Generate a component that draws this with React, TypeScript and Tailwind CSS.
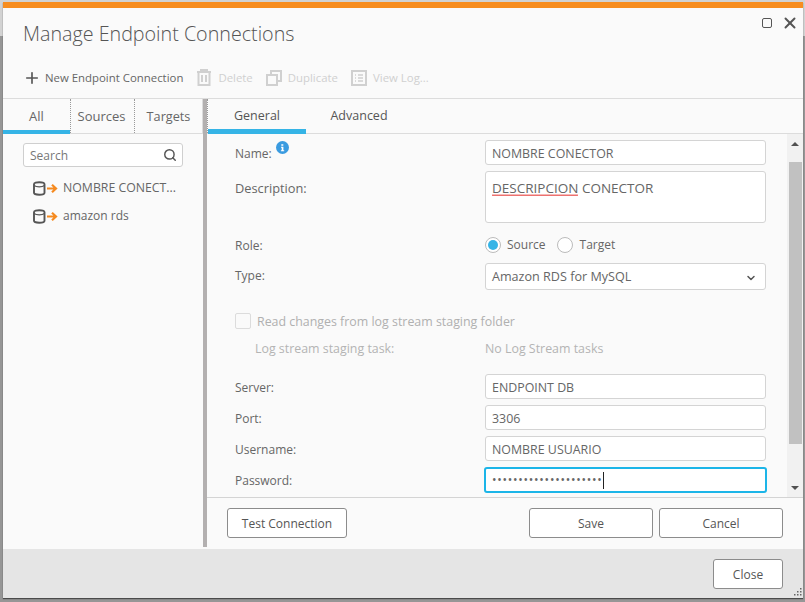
import { Plus, Search, X, ChevronDown } from "lucide-react";
import type { ReactNode } from "react";

const font = "font-['Open_Sans',sans-serif]";

const squigglePath = "M0 2" + Array.from({ length: 43 }, () => "l1-1.5 1 1.5").join("");

const TrashIcon = () => (
  <svg width="16" height="17" viewBox="0 0 16 17" fill="none" stroke="#d0d0d0" strokeWidth="2">
    <path d="M1 3h14M5 3V1h6v2M2.5 3v13h11V3M6 6v7M10 6v7" />
  </svg>
);

const CopyIcon = () => (
  <svg width="16" height="16" viewBox="0 0 16 16" fill="none" stroke="#d0d0d0" strokeWidth="2">
    <path d="M5 4V1h10v10h-3" />
    <rect x="1" y="5" width="10" height="10" />
  </svg>
);

const LogIcon = () => (
  <svg width="16" height="16" viewBox="0 0 16 16" fill="none" stroke="#d0d0d0" strokeWidth="2">
    <rect x="1" y="1" width="14" height="14" />
    <path d="M4 5h1M4 8h1M4 11h1M7 5h5M7 8h5M7 11h5" strokeWidth="1.5" />
  </svg>
);

const DbIcon = () => (
  <svg width="26" height="15" viewBox="0 0 26 15" fill="none">
    <path d="M1 3.2C1 .6 11.5 .6 11.5 3.2v8.6c0 2.6-10.5 2.6-10.5 0z" stroke="#555" strokeWidth="1.9" />
    <path d="M1 4.5c2.5 1.8 8 1.8 10.5 0" stroke="#555" strokeWidth="1.4" />
    <path d="M14 7.5h9M19 3.8l4 3.7-4 3.7" stroke="#f58a1f" strokeWidth="2.2" />
  </svg>
);

const InfoDot = () => (
  <svg className="absolute left-[41px] top-[-4px]" width="13" height="13" viewBox="0 0 13 13">
    <circle cx="6.5" cy="6.5" r="6.5" fill="#3a9be0" />
    <path d="M5.3 3.2h2v1.6h-2zM5 5.8h2.4v3.4h.8v1H4.9v-1h.8V6.8H5z" fill="#fff" />
  </svg>
);

const Tool = ({ icon, label, className }: { icon: ReactNode; label: string; className: string }) => (
  <div className={`flex items-center gap-[6px] text-[11.4px] text-[#d0d0d0] ${className}`}>
    {icon}
    <span>{label}</span>
  </div>
);

const Field = ({ value }: { value: string }) => (
  <div className="h-[25px] w-[281px] rounded-[3px] border border-[#d4d4d4] bg-white pl-[6px] text-[12.4px] leading-[25px] text-[#666]">
    {value}
  </div>
);

const Row = ({ label, children, className = "" }: { label: ReactNode; children: ReactNode; className?: string }) => (
  <div className={`flex items-center ${className}`}>
    <div className="w-[250px] pt-[2px] text-[12px] text-[#666]">{label}</div>
    {children}
  </div>
);

const Btn = ({ label, className }: { label: string; className: string }) => (
  <button className={`h-[30px] rounded-[3px] border border-[#8c8c8c] bg-white pt-[1px] text-[12px] text-[#555] ${className}`}>
    {label}
  </button>
);

export default function App() {
  return (
    <div className={`h-[602px] w-[805px] overflow-hidden bg-[linear-gradient(#d2d2d2_36px,#969696_36px)] pl-[3px] pt-[2px] ${font}`}>
      <div className="flex h-[596px] w-[800px] flex-col bg-[#fafafa] shadow-[0_1px_1px_rgba(0,0,0,0.5)]">
        <div className="h-[6px] bg-[#f78d1f]" />

        <div className="flex h-[52px] items-start justify-between pl-[20px] pr-[4px]">
          <h1 className="pt-[12px] text-[19.7px] font-light leading-[28px] text-[#555]">Manage Endpoint Connections</h1>
          <div className="flex items-center gap-[9px] pt-[6px]">
            <div className="h-[10px] w-[10px] rounded-[2px] border border-[#555]" />
            <X size={18} strokeWidth={2.6} className="text-[#555]" />
          </div>
        </div>

        <div className="flex h-[39px] items-center border-b border-[#dcdcdc] pb-[2px] pl-[22px]">
          <div className="flex items-center gap-[6px] text-[11.4px] text-[#666]">
            <Plus size={18} strokeWidth={2.2} className="-mx-[2px] text-[#555]" />
            <span>New Endpoint Connection</span>
          </div>
          <Tool icon={<TrashIcon />} label="Delete" className="ml-[13px] gap-[5px]" />
          <Tool icon={<CopyIcon />} label="Duplicate" className="ml-[13px]" />
          <Tool icon={<LogIcon />} label="View Log..." className="ml-[13px]" />
        </div>

        <div className="flex min-h-0 flex-1">
          <div className="w-[200px] shrink-0">
            <div className="flex h-[35px] border-b border-r border-[#dcdcdc] text-[13px] text-[#666]">
              <div className="-mb-px flex w-[67px] items-center justify-center border-b-[4px] border-[#35b4e6] pt-[5px]">All</div>
              <div className="flex w-[64px] items-center justify-center border-l border-dotted border-[#999] pr-[2px] pt-[1px]">Sources</div>
              <div className="flex flex-1 items-center justify-center border-l border-dotted border-[#999] pt-[1px] text-[12.7px]">Targets</div>
            </div>
            <div className="ml-[20px] mt-[9px] flex h-[24px] w-[160px] items-center justify-between rounded-[3px] border border-[#cfcfcf] bg-white pl-[6px] pr-[5px] text-[12px] text-[#777]">
              <span className="pt-[1px]">Search</span>
              <Search size={14} strokeWidth={2.5} className="text-[#555]" />
            </div>
            <div className="ml-[30px] mt-[7px] flex h-[28px] items-center gap-[4px] text-[12.3px] text-[#666]">
              <DbIcon />
              <span>NOMBRE CONECT...</span>
            </div>
            <div className="ml-[30px] flex h-[28px] items-center gap-[4px] text-[12px] text-[#666]">
              <DbIcon />
              <span>amazon rds</span>
            </div>
          </div>

          <div className="mb-[2px] w-[4px] shrink-0 bg-[#b3b0b0]" />

          <div className="flex min-w-0 flex-1 flex-col">
            <div className="flex h-[35px] shrink-0 border-b border-[#dcdcdc] text-[12.5px] text-[#555]">
              <div className="w-px border-l border-dotted border-[#999]" />
              <div className="-mb-px flex w-[98px] items-center justify-center border-b-[5px] border-[#35b4e6] pt-[4px]">General</div>
              <div className="flex w-[106px] items-center justify-center">Advanced</div>
            </div>

            <div className="flex h-[364px] shrink-0 border-b border-[#d4d4d4]">
              <div className="flex-1 overflow-hidden pl-[28px] pt-[6px]">
                <Row
                  label={
                    <span className="relative">
                      Name:
                      <InfoDot />
                    </span>
                  }
                >
                  <Field value="NOMBRE CONECTOR" />
                </Row>
                <div className="mt-[6px] flex">
                  <div className="w-[250px] pt-[8px] text-[12.8px] text-[#666]">Description:</div>
                  <div className="h-[52px] w-[281px] rounded-[3px] border border-[#d4d4d4] bg-white pl-[6px] pt-[6px] text-[13.5px] leading-[20px] text-[#666]">
                    <span className="relative">
                      DESCRIPCION
                      <svg className="absolute left-0 top-[15px]" width="86" height="3" viewBox="0 0 86 3" fill="none">
                        <path d={squigglePath} stroke="#e53935" strokeWidth="0.8" />
                      </svg>
                    </span>{" "}
                    CONECTOR
                  </div>
                </div>
                <Row label="Role:" className="mt-[13px] h-[17px]">
                  <div className="flex items-center text-[12px] text-[#666]">
                    <div className="flex h-[16px] w-[16px] items-center justify-center rounded-full border border-[#bbb] bg-white">
                      <div className="h-[10px] w-[10px] rounded-full bg-[#35b4e6]" />
                    </div>
                    <span className="ml-[6px]">Source</span>
                    <div className="ml-[11px] h-[16px] w-[16px] rounded-full border border-[#bbb] bg-white" />
                    <span className="ml-[7px]">Target</span>
                  </div>
                </Row>
                <div className="mt-[10px] flex items-center">
                  <div className="w-[250px] pb-[2px] text-[12px] text-[#666]">Type:</div>
                  <div className="flex h-[27px] w-[281px] items-center justify-between rounded-[3px] border border-[#d4d4d4] bg-white pl-[6px] pr-[8px] pt-[2px] text-[12.6px] text-[#666]">
                    <span>Amazon RDS for MySQL</span>
                    <ChevronDown size={12} strokeWidth={3} className="text-[#555]" />
                  </div>
                </div>
                <div className="mt-[23px] flex h-[16px] items-center text-[12.4px] text-[#b0b0b0]">
                  <div className="h-[16px] w-[16px] rounded-[2px] border border-[#dcdcdc] bg-[#fafafa]" />
                  <span className="ml-[6px] pt-[2px]">Read changes from log stream staging folder</span>
                </div>
                <div className="mt-[11px] flex h-[17px] items-center pt-[2px] text-[12.4px] text-[#b4b4b4]">
                  <span className="ml-[20px] w-[230px]">Log stream staging task:</span>
                  <span>No Log Stream tasks</span>
                </div>
                <Row label="Server:" className="mt-[17px]">
                  <Field value="ENDPOINT DB" />
                </Row>
                <Row label="Port:" className="mt-[6px]">
                  <Field value="3306" />
                </Row>
                <Row label="Username:" className="mt-[6px]">
                  <Field value="NOMBRE USUARIO" />
                </Row>
                <Row label="Password:" className="mt-[6px]">
                  <div className="-ml-px flex h-[26px] w-[283px] items-center rounded-[3px] border-2 border-[#1cb5e8] bg-white pl-[6px] text-[12px] text-[#666]">
                    <span className="tracking-[0.75px]">•••••••••••••••••••••</span>
                    <span className="h-[17px] w-px bg-[#222]" />
                  </div>
                </Row>
              </div>

              <div className="flex w-[16px] shrink-0 flex-col items-center bg-[#f1f1f1]">
                <div className="mt-[8px] h-0 w-0 border-x-[4px] border-b-[4px] border-x-transparent border-b-[#505050]" />
                <div className="mt-[16px] h-[282px] w-[13px] bg-[#c1c1c1]" />
                <div className="mt-[42px] h-0 w-0 border-x-[4px] border-t-[4px] border-x-transparent border-t-[#505050]" />
              </div>
            </div>

            <div className="flex flex-1 items-start px-[20px] pt-[10px]">
              <Btn label="Test Connection" className="w-[120px]" />
              <Btn label="Save" className="ml-auto w-[124px]" />
              <Btn label="Cancel" className="ml-[6px] w-[124px]" />
            </div>
          </div>
        </div>

        <div className="relative flex h-[49px] shrink-0 items-start justify-end bg-[#e5e5e5] pr-[20px] pt-[10px]">
          <Btn label="Close" className="w-[70px]" />
          <svg className="absolute bottom-[2px] right-[1px]" width="9" height="9" viewBox="0 0 9 9" fill="#666">
            <rect x="7" y="1" width="1.5" height="1.5" />
            <rect x="4" y="4" width="1.5" height="1.5" />
            <rect x="7" y="4" width="1.5" height="1.5" />
            <rect x="1" y="7" width="1.5" height="1.5" />
            <rect x="4" y="7" width="1.5" height="1.5" />
            <rect x="7" y="7" width="1.5" height="1.5" />
          </svg>
        </div>
      </div>
    </div>
  );
}
